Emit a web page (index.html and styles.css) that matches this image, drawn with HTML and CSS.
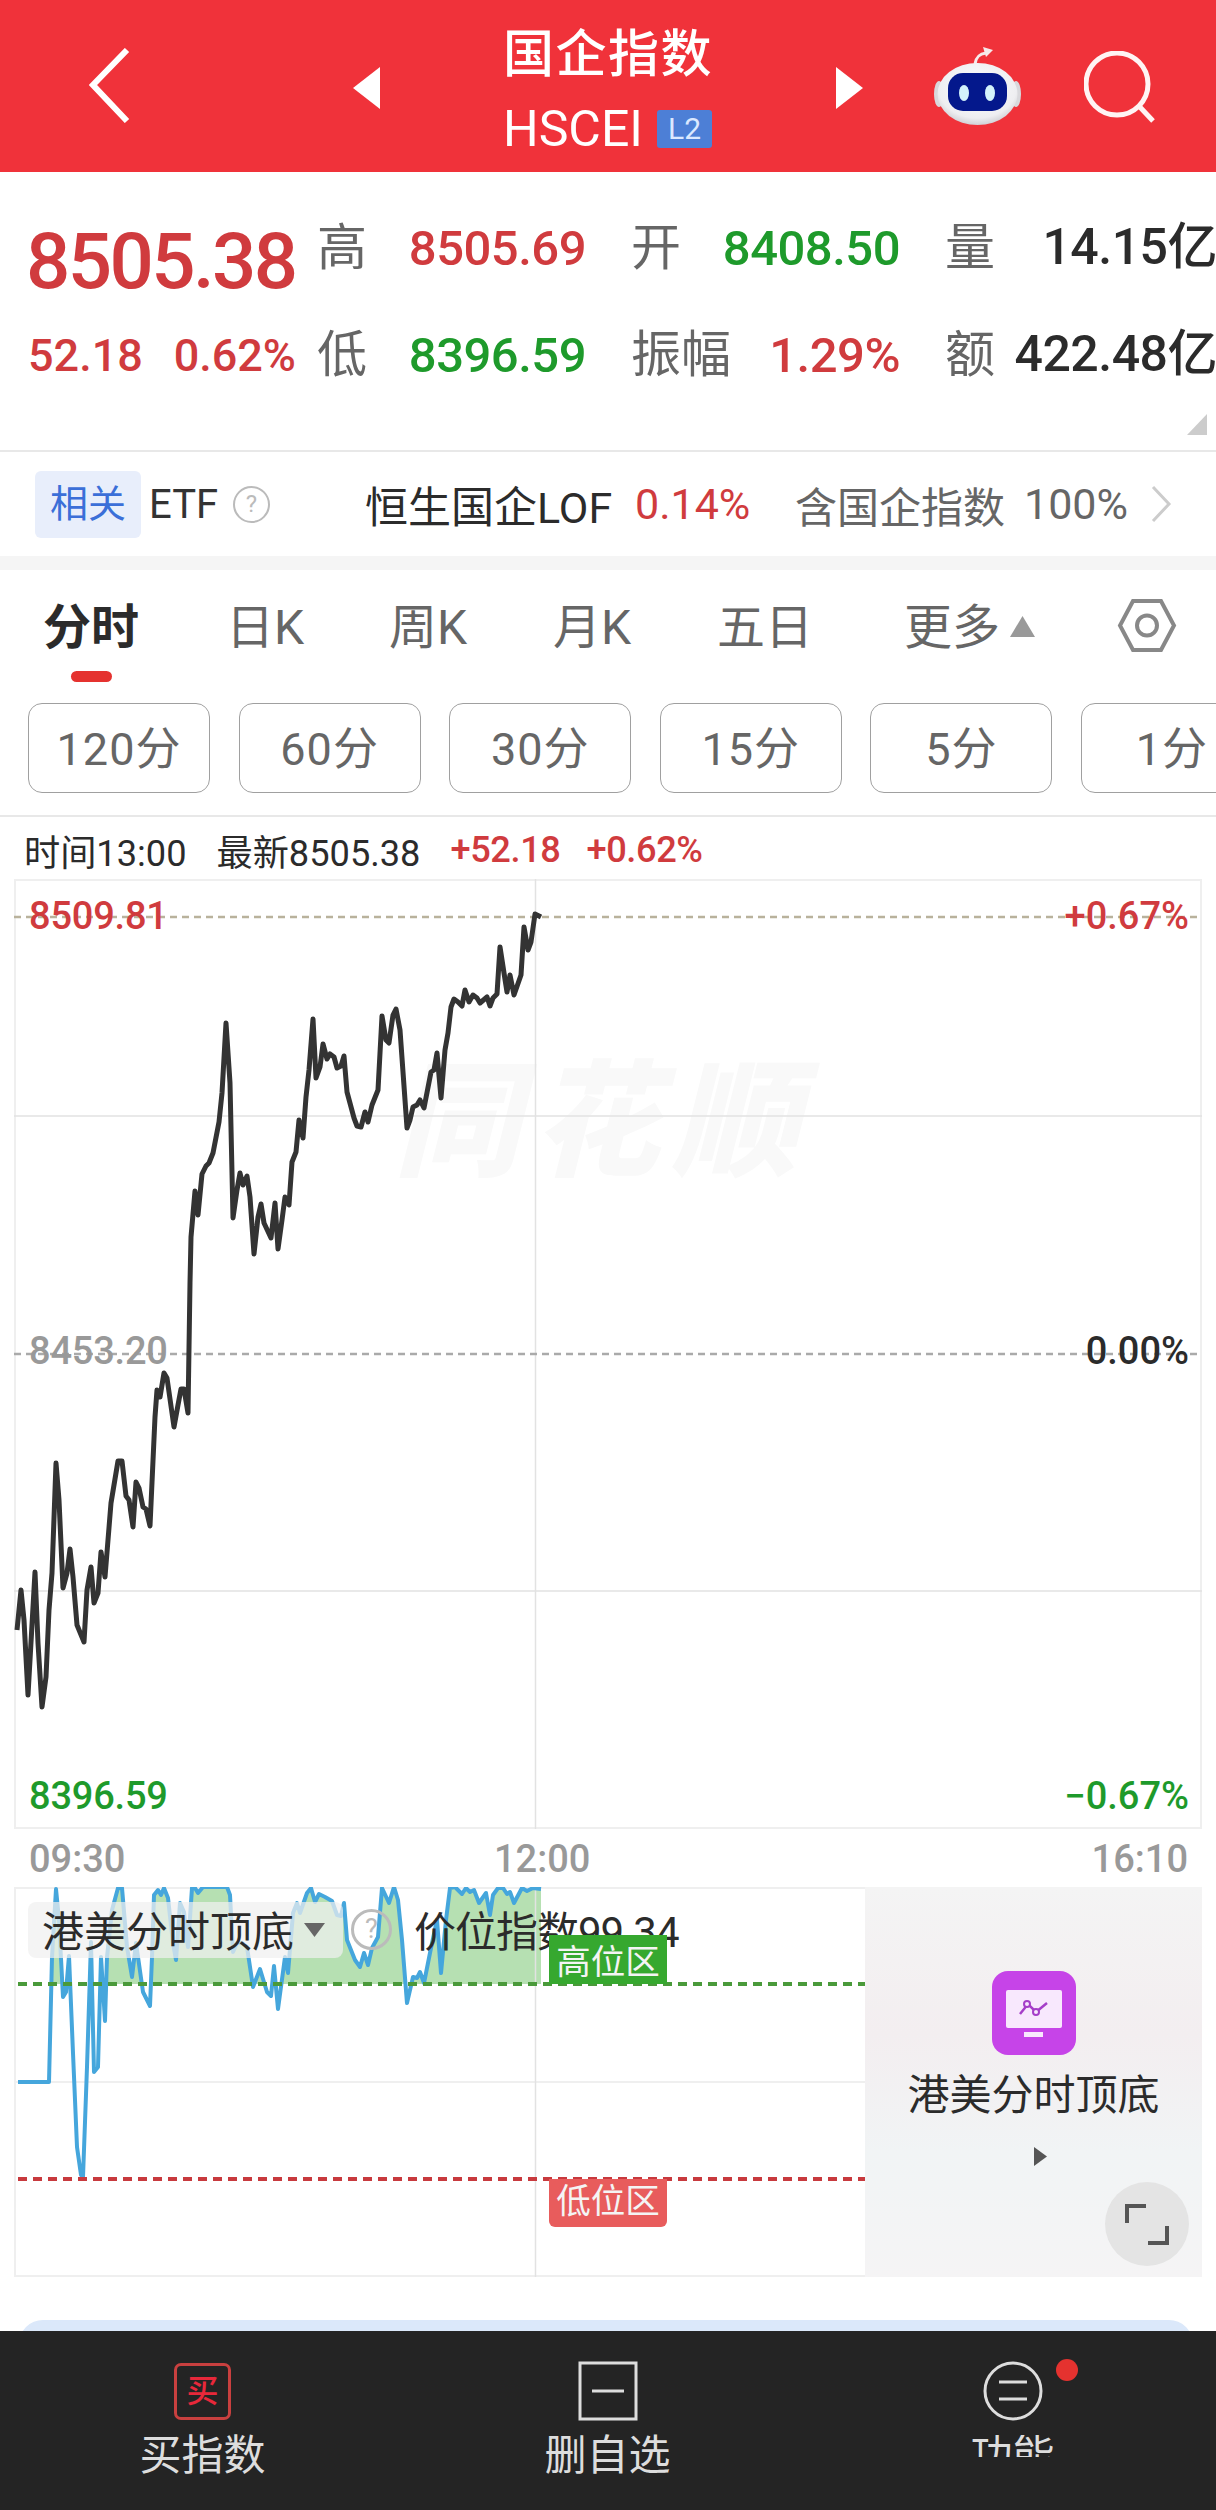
FILE: index.html
```html
<!DOCTYPE html>
<html lang="zh-CN">
<head>
    <meta charset="UTF-8">
    <meta name="viewport" content="width=device-width, initial-scale=1.0">
    <title>国企指数 HSCEI</title>
    <link rel="stylesheet" href="styles.css">
</head>
<body>
<div class="page">
    <header class="topbar">
        <svg class="back" viewBox="0 0 41 75"><polyline points="38,2 4,37 38,73"/></svg>
        <svg class="arrow-left" viewBox="0 0 27 42"><polygon points="27,0 27,42 0,21"/></svg>
        <div class="title">
            <div class="title-name">国企指数</div>
            <div class="title-code">HSCEI <span class="badge">L2</span></div>
        </div>
        <svg class="arrow-right" viewBox="0 0 27 42"><polygon points="0,0 0,42 27,21"/></svg>
        <svg class="robot" viewBox="0 0 87 80">
            <defs>
                <radialGradient id="head" cx="50%" cy="40%" r="65%">
                    <stop offset="0%" stop-color="#ffffff"/>
                    <stop offset="75%" stop-color="#eeeef1"/>
                    <stop offset="100%" stop-color="#c4c4ca"/>
                </radialGradient>
            </defs>
            <path class="antenna" d="M41 19 C42 12 45 9 52 8"/>
            <polygon class="antenna-tip" points="49,2 59,5 52,12"/>
            <ellipse class="ear" cx="5" cy="49" rx="5" ry="13"/>
            <ellipse class="ear" cx="82" cy="49" rx="5" ry="13"/>
            <ellipse cx="43.5" cy="49" rx="40" ry="31" fill="url(#head)"/>
            <rect class="visor" x="14" y="28" width="59" height="38" rx="15"/>
            <ellipse class="eye" cx="30" cy="48" rx="5" ry="8"/>
            <ellipse class="eye" cx="56" cy="48" rx="5" ry="8"/>
        </svg>
        <svg class="search" viewBox="0 0 72 72"><circle cx="33" cy="33" r="31"/><line x1="55" y1="55" x2="69" y2="70"/></svg>
    </header>

    <section class="quote">
        <div class="quote-left">
            <div class="price up">8505.38</div>
            <div class="change up"><span>52.18</span><span>0.62%</span></div>
        </div>
        <div class="stats">
            <div class="stat"><span class="stat-label">高</span><span class="stat-value up">8505.69</span></div>
            <div class="stat"><span class="stat-label">开</span><span class="stat-value down">8408.50</span></div>
            <div class="stat stat-last"><span class="stat-label">量</span><span class="stat-value">14.15亿</span></div>
            <div class="stat"><span class="stat-label">低</span><span class="stat-value down">8396.59</span></div>
            <div class="stat"><span class="stat-label">振幅</span><span class="stat-value up">1.29%</span></div>
            <div class="stat stat-last"><span class="stat-label">额</span><span class="stat-value">422.48亿</span></div>
        </div>
        <div class="corner"></div>
    </section>

    <section class="related">
        <span class="related-tag">相关</span>
        <span class="related-etf">ETF</span>
        <span class="help help-small">?</span>
        <span class="related-name">恒生国企LOF</span>
        <span class="related-pct">0.14%</span>
        <span class="related-hold">含国企指数</span>
        <span class="related-num">100%</span>
        <svg class="chevron" viewBox="0 0 22 38"><polyline points="3,2 19,19 3,36"/></svg>
    </section>

    <div class="band"></div>

    <nav class="tabs">
        <div class="tab tab-active">分时</div>
        <div class="tab">日K</div>
        <div class="tab">周K</div>
        <div class="tab">月K</div>
        <div class="tab">五日</div>
        <div class="tab tab-more">更多
            <svg class="more-arrow" viewBox="0 0 25 21"><polygon points="12.5,0 25,21 0,21"/></svg>
        </div>
        <svg class="hex" viewBox="0 0 60 55"><polygon points="16,3 44,3 57,27.5 44,52 16,52 3,27.5"/><circle cx="30" cy="27.5" r="10"/></svg>
    </nav>

    <div class="periods">
        <div class="period">120分</div>
        <div class="period">60分</div>
        <div class="period">30分</div>
        <div class="period">15分</div>
        <div class="period">5分</div>
        <div class="period">1分</div>
    </div>

    <div class="info">
        <span>时间13:00</span>
        <span>最新8505.38</span>
        <span class="up">+52.18</span>
        <span class="up">+0.62%</span>
    </div>

    <section class="chart-main">
        <svg class="chart-svg" viewBox="14 879 1188 950" width="1188" height="950">
            <text class="watermark" x="394" y="1166">同花顺</text>
            <line class="grid" x1="14" y1="880" x2="1202" y2="880"/>
            <line class="grid" x1="14" y1="1828" x2="1202" y2="1828"/>
            <line class="grid" x1="15" y1="879" x2="15" y2="1829"/>
            <line class="grid" x1="1201" y1="879" x2="1201" y2="1829"/>
            <line class="grid grid-mid" x1="14" y1="1116" x2="1202" y2="1116"/>
            <line class="grid grid-mid" x1="14" y1="1591" x2="1202" y2="1591"/>
            <line class="grid grid-mid" x1="535.5" y1="879" x2="535.5" y2="1829"/>
            <line class="dash-top" x1="14" y1="917" x2="1202" y2="917"/>
            <line class="dash-mid" x1="14" y1="1354" x2="1202" y2="1354"/>
            <polyline class="price-line" points="17,1630 21,1590 24,1620 28,1695 35,1572 38,1643 42,1707 46,1677 49,1610 52,1573 56,1463 59,1500 63,1588 67,1573 70,1549 73,1577 77,1625 84,1642 87,1590 91,1567 94,1603 98,1593 101,1552 105,1577 111,1503 118,1461 122,1461 126,1496 129,1500 133,1527 136,1482 139,1488 143,1507 146,1509 150,1526 155,1417 157,1390 160,1397 164,1373 167,1378 174,1427 178,1405 181,1389 184,1389 188,1413 190,1283 191,1237 195,1191 198,1215 202,1174 206,1166 209,1163 213,1153 219,1122 222,1093 226,1023 230,1083 233,1218 237,1190 240,1173 243,1185 247,1176 250,1197 254,1254 258,1217 261,1204 264,1223 271,1238 275,1203 278,1249 282,1220 285,1197 289,1205 292,1162 296,1152 299,1120 303,1138 306,1097 309,1070 313,1019 316,1078 320,1067 323,1044 327,1059 330,1054 334,1057 337,1068 341,1066 344,1056 347,1092 354,1118 357,1126 361,1127 365,1112 368,1122 372,1105 378,1090 382,1016 386,1040 389,1043 393,1015 396,1009 400,1030 407,1128 410,1120 413,1107 417,1105 420,1100 424,1108 431,1072 434,1070 437,1053 441,1098 445,1050 448,1033 451,1007 454,999 458,1002 462,1006 465,990 469,1002 473,995 477,998 480,1003 487,997 490,1006 493,998 497,994 500,947 504,973 507,992 510,975 514,995 521,975 524,927 528,950 531,942 535,914 541,917"/>
        </svg>
        <span class="axis-label label-left label-top up">8509.81</span>
        <span class="axis-label label-left label-mid muted">8453.20</span>
        <span class="axis-label label-left label-bottom down">8396.59</span>
        <span class="axis-label label-right label-top up">+0.67%</span>
        <span class="axis-label label-right label-mid">0.00%</span>
        <span class="axis-label label-right label-bottom down">−0.67%</span>
    </section>

    <div class="time-axis">
        <span>09:30</span>
        <span>12:00</span>
        <span>16:10</span>
    </div>

    <section class="sub-chart">
        <div class="sub-plot">
            <svg class="chart-svg" viewBox="14 1887 851 390" width="851" height="390">
                <defs>
                    <clipPath id="aboveHigh"><rect x="14" y="1887" width="851" height="97"/></clipPath>
                </defs>
                <line class="grid" x1="14" y1="1888" x2="865" y2="1888"/>
                <line class="grid" x1="14" y1="2276" x2="865" y2="2276"/>
                <line class="grid" x1="15" y1="1887" x2="15" y2="2277"/>
                <line class="grid" x1="14" y1="2082" x2="865" y2="2082"/>
                <polygon class="high-fill" clip-path="url(#aboveHigh)" points="49,2082 52,1957 56,1889 59,1920 63,1997 66,1992 69,1956 73,2053 77,2147 81,2175 83,2177 87,2067 91,1942 94,2072 98,2067 101,1957 105,2021 107,1957 112,1910 118,1888 122,1888 127,1947 132,1977 136,1943 143,1992 150,2006 152,1957 154,1895 158,1890 161,1895 164,1888 168,1898 173,1943 176,1960 180,1903 184,1912 188,1947 192,1888 195,1888 198,1893 203,1887 227,1887 230,1895 233,1952 237,1943 242,1943 247,1947 253,1987 260,1969 267,1992 271,1996 274,1966 278,2009 285,1957 288,1973 293,1913 297,1903 300,1913 307,1893 311,1888 315,1902 319,1894 325,1897 332,1901 337,1915 341,1916 344,1903 347,1940 355,1960 360,1967 364,1953 368,1965 372,1948 378,1937 382,1888 389,1903 394,1887 398,1900 402,1940 407,2003 413,1977 417,1978 420,1972 424,1983 431,1948 437,1920 441,1973 446,1920 450,1888 455,1887 462,1894 466,1888 470,1892 474,1890 479,1903 486,1893 490,1915 493,1895 498,1888 503,1888 507,1894 510,1892 514,1903 522,1888 527,1891 533,1888 541,1889 541,2100 49,2100"/>
                <line class="grid grid-mid" x1="535.5" y1="1887" x2="535.5" y2="2277"/>
                <polyline class="index-line" points="18,2082 49,2082 52,1957 56,1889 59,1920 63,1997 66,1992 69,1956 73,2053 77,2147 81,2175 83,2177 87,2067 91,1942 94,2072 98,2067 101,1957 105,2021 107,1957 112,1910 118,1888 122,1888 127,1947 132,1977 136,1943 143,1992 150,2006 152,1957 154,1895 158,1890 161,1895 164,1888 168,1898 173,1943 176,1960 180,1903 184,1912 188,1947 192,1888 195,1888 198,1893 203,1887 227,1887 230,1895 233,1952 237,1943 242,1943 247,1947 253,1987 260,1969 267,1992 271,1996 274,1966 278,2009 285,1957 288,1973 293,1913 297,1903 300,1913 307,1893 311,1888 315,1902 319,1894 325,1897 332,1901 337,1915 341,1916 344,1903 347,1940 355,1960 360,1967 364,1953 368,1965 372,1948 378,1937 382,1888 389,1903 394,1887 398,1900 402,1940 407,2003 413,1977 417,1978 420,1972 424,1983 431,1948 437,1920 441,1973 446,1920 450,1888 455,1887 462,1894 466,1888 470,1892 474,1890 479,1903 486,1893 490,1915 493,1895 498,1888 503,1888 507,1894 510,1892 514,1903 522,1888 527,1891 533,1888 541,1889"/>
                <line class="dash-high" x1="18" y1="1984" x2="865" y2="1984"/>
                <line class="dash-low" x1="18" y1="2179" x2="865" y2="2179"/>
            </svg>
            <div class="sub-head">
                <div class="sub-chip"><span class="chip-text">港美分时顶底</span>
                    <svg class="chip-arrow" viewBox="0 0 21 14"><polygon points="0,0 21,0 10.5,14"/></svg>
                </div>
                <span class="help help-large">?</span>
                <span class="sub-value">价位指数99.34</span>
            </div>
            <span class="zone zone-high">高位区</span>
            <span class="zone zone-low">低位区</span>
        </div>
        <div class="sub-side">
            <svg class="side-icon" viewBox="0 0 84 84">
                <rect class="side-icon-bg" width="84" height="84" rx="16"/>
                <rect class="side-icon-screen" x="14" y="19" width="56" height="38" rx="2"/>
                <rect class="side-icon-screen" x="32" y="61" width="19" height="5"/>
                <polyline class="side-icon-line" points="28,43 36,33 44,41 55,32"/>
                <circle class="side-icon-dot" cx="35" cy="33" r="3"/>
                <circle class="side-icon-dot" cx="44" cy="41" r="3"/>
            </svg>
            <div class="side-name">港美分时顶底</div>
            <svg class="side-play" viewBox="0 0 13 19"><polygon points="0,0 13,9.5 0,19"/></svg>
            <div class="expand">
                <svg viewBox="0 0 84 84"><polyline points="22,41 22,24 41,24"/><polyline points="43,61 62,61 62,44"/></svg>
            </div>
        </div>
    </section>

    <div class="next-card"></div>

    <footer class="footer">
        <div class="foot-item">
            <div class="buy-icon">买</div>
            <div class="foot-label">买指数</div>
        </div>
        <div class="foot-item">
            <svg class="foot-icon" viewBox="0 0 60 60"><rect x="2" y="2" width="56" height="56"/><line x1="14" y1="30" x2="46" y2="30"/></svg>
            <div class="foot-label">删自选</div>
        </div>
        <div class="foot-item foot-more">
            <svg class="foot-icon" viewBox="0 0 60 60"><circle cx="30" cy="30" r="28"/><line x1="16" y1="21" x2="44" y2="21"/><line x1="16" y1="38" x2="44" y2="38"/></svg>
            <span class="dot"></span>
            <div class="foot-label foot-label-cut">功能</div>
        </div>
    </footer>
</div>
</body>
</html>
```

FILE: styles.css
```css
* {
    box-sizing: border-box;
}
body {
    margin: 0;
    background: white;
    font-family: Roboto, "Noto Sans CJK SC", sans-serif;
    color: #2b2b2b;
}
.page {
    width: 1216px;
    height: 2510px;
    overflow: hidden;
    display: flex;
    flex-direction: column;
}
.up { color: #d03b3e; }
.down { color: #1e9a2b; }
.muted { color: #999; }

/* top bar */
.topbar {
    height: 172px;
    flex: none;
    background: #f0323a;
    display: flex;
    align-items: center;
    padding-left: 89px;
    color: white;
}
.back {
    width: 41px;
    height: 75px;
    margin-right: 223px;
    margin-top: -1px;
}
.back polyline {
    fill: none;
    stroke: white;
    stroke-width: 6;
}
.arrow-left, .arrow-right {
    width: 27px;
    height: 42px;
    fill: white;
    margin-top: 4px;
}
.title {
    width: 208px;
    margin: 0 124px;
    padding-top: 6px;
}
.title-name {
    font-size: 51px;
    line-height: 50px;
    font-weight: 500;
    letter-spacing: 1.5px;
    white-space: nowrap;
    margin-left: -1px;
}
.title-code {
    display: flex;
    align-items: center;
    justify-content: space-between;
    margin-top: 30px;
    height: 38px;
    font-size: 50px;
    white-space: nowrap;
    margin-left: -1px;
}
.badge {
    width: 55px;
    height: 38px;
    line-height: 38px;
    background: #4d7fd6;
    border-radius: 3px;
    text-align: center;
    font-size: 30px;
    color: #dbe8ff;
}
.robot {
    width: 87px;
    height: 80px;
    margin-left: 71px;
    margin-top: -2px;
}
.antenna {
    fill: none;
    stroke: #f6eaea;
    stroke-width: 3;
}
.antenna-tip { fill: #f6eaea; }
.ear { fill: #d8d8dc; }
.visor { fill: #04188c; }
.eye { fill: #d4f3fb; }
.search {
    width: 72px;
    height: 72px;
    margin-left: 63px;
    margin-top: 2px;
}
.search circle, .search line {
    fill: none;
    stroke: #fff4f4;
    stroke-width: 5;
}

/* quote block */
.quote {
    height: 280px;
    flex: none;
    display: flex;
    border-bottom: 2px solid #e8e8e8;
    padding-left: 29px;
    position: relative;
}
.quote-left {
    width: 288px;
    padding-top: 61px;
}
.price {
    font-size: 78px;
    line-height: 58px;
    font-weight: 500;
    letter-spacing: -2.6px;
    margin-left: -3px;
}
.change {
    display: flex;
    justify-content: space-between;
    width: 268px;
    margin: 43px 0 0 -1px;
    font-size: 45px;
    line-height: 44px;
    font-weight: 500;
}
.stats {
    display: grid;
    grid-template-columns: repeat(3, 269px);
    grid-auto-rows: 54px;
    column-gap: 45px;
    row-gap: 53px;
    padding-top: 50px;
}
.stat {
    display: flex;
    align-items: center;
    justify-content: space-between;
    white-space: nowrap;
}
.stat-last {
    margin-right: -3px;
}
.stat-label {
    font-size: 50px;
    line-height: 54px;
    margin-top: -3px;
    color: #666;
}
.stat-value {
    font-size: 49px;
    line-height: 54px;
    font-weight: 500;
    letter-spacing: -0.5px;
}
.stat-last .stat-value {
    font-size: 50px;
    margin-top: -5px;
}
.corner {
    position: absolute;
    left: 1187px;
    top: 242px;
    width: 20px;
    height: 21px;
    background: #ccc;
    clip-path: polygon(100% 0, 100% 100%, 0 100%);
}

/* related row */
.related {
    height: 104px;
    flex: none;
    display: flex;
    align-items: center;
    padding-left: 35px;
    font-size: 42px;
    white-space: nowrap;
}
.related-tag {
    width: 106px;
    height: 67px;
    line-height: 67px;
    text-align: center;
    background: #e8eefb;
    border-radius: 6px;
    color: #3b6fd8;
    font-size: 38px;
    margin-right: 8px;
}
.related-etf {
    font-size: 40px;
    width: 84px;
    color: #333;
}
.help {
    border-radius: 50%;
    text-align: center;
    color: #bbb;
    border: 2px solid #bbb;
}
.help-small {
    width: 37px;
    height: 37px;
    line-height: 33px;
    font-size: 24px;
}
.related-name {
    margin-left: 95px;
    width: 270px;
    font-size: 43px;
    color: #2b2b2b;
}
.related-pct {
    width: 160px;
    color: #d03b3e;
    font-size: 43px;
}
.related-hold {
    width: 229px;
    color: #666;
}
.related-num {
    width: 126px;
    font-size: 43px;
    color: #666;
}
.chevron {
    width: 22px;
    height: 38px;
}
.chevron polyline {
    fill: none;
    stroke: #ccc;
    stroke-width: 3;
}
.band {
    height: 14px;
    flex: none;
    background: #f5f5f5;
}

/* tabs */
.tabs {
    height: 133px;
    flex: none;
    display: grid;
    grid-template-columns: 183px 163px 164px 164px 187px 213px 60px;
    padding: 34px 0 0 43px;
    font-size: 48px;
    color: #666;
}
.tab {
    line-height: 48px;
    white-space: nowrap;
}
.tab-active {
    font-weight: 700;
    color: #2b2b2b;
}
.tab-active::after {
    content: "";
    display: block;
    width: 41px;
    height: 11px;
    margin: 19px 0 0 28px;
    background: #e5322f;
    border-radius: 6px;
}
.tab-more {
    display: flex;
}
.more-arrow {
    width: 25px;
    height: 21px;
    fill: #999;
    margin: 12px 0 0 10px;
}
.hex {
    width: 60px;
    height: 55px;
    margin-top: -6px;
}
.hex polygon, .hex circle {
    fill: none;
    stroke: #888;
    stroke-width: 4;
}

/* period buttons */
.periods {
    height: 114px;
    flex: none;
    display: flex;
    gap: 28.6px;
    padding-left: 28px;
    border-bottom: 2px solid #e8e8e8;
    white-space: nowrap;
}
.period {
    width: 182px;
    height: 90px;
    flex: none;
    line-height: 91px;
    text-align: center;
    border: 1.5px solid #a0a0a0;
    border-radius: 14px;
    font-size: 45px;
    letter-spacing: 1px;
    color: #666;
}

/* info row */
.info {
    height: 62px;
    flex: none;
    display: flex;
    align-items: center;
    gap: 30px;
    padding: 3px 0 0 24px;
    font-size: 36.2px;
    white-space: nowrap;
}
.info .up {
    font-weight: 500;
    letter-spacing: -0.4px;
}
.info .up + .up {
    margin-left: -4px;
}

/* charts */
.chart-main {
    width: 1188px;
    height: 950px;
    flex: none;
    margin-left: 14px;
    position: relative;
}
.chart-svg {
    display: block;
    overflow: hidden;
}
.watermark {
    font-size: 126px;
    font-weight: 900;
    font-style: italic;
    letter-spacing: 13px;
    fill: #f9f9f9;
}
.grid {
    stroke: #efefef;
    stroke-width: 2;
}
.grid-mid {
    stroke: #e2e2e2;
    stroke-width: 1.5;
}
.dash-top {
    stroke: #b9b29c;
    stroke-width: 2.5;
    stroke-dasharray: 7 5;
}
.dash-mid {
    stroke: #aaa;
    stroke-width: 2.5;
    stroke-dasharray: 7 5;
}
.price-line {
    fill: none;
    stroke: #333;
    stroke-width: 5;
    stroke-linejoin: round;
}
.axis-label {
    position: absolute;
    font-size: 38px;
    line-height: 40px;
    font-weight: 500;
    white-space: nowrap;
}
.label-left { left: 15px; letter-spacing: -0.2px; }
.label-right { right: 13px; }
.label-top { top: 17px; }
.label-mid { top: 452px; }
.label-bottom { top: 897px; }
.time-axis {
    height: 58px;
    flex: none;
    display: grid;
    grid-template-columns: 465px 1fr auto;
    align-items: center;
    padding: 2px 28px 0 29px;
    font-size: 38px;
    font-weight: 500;
    color: #999;
}
.sub-chart {
    height: 390px;
    flex: none;
    margin-left: 14px;
    display: flex;
}
.sub-plot {
    width: 851px;
    height: 390px;
    position: relative;
}
.high-fill { fill: #b6e0b2; }
.index-line {
    fill: none;
    stroke: #45a6dc;
    stroke-width: 4;
    stroke-linejoin: round;
}
.dash-high {
    stroke: #4a9a3a;
    stroke-width: 4;
    stroke-dasharray: 9 6;
}
.dash-low {
    stroke: #c83a3e;
    stroke-width: 4;
    stroke-dasharray: 9 6;
}
.sub-head {
    position: absolute;
    left: 14px;
    top: 13px;
    display: flex;
    align-items: center;
    white-space: nowrap;
    font-size: 42px;
}
.sub-chip {
    width: 315px;
    height: 56px;
    display: flex;
    align-items: center;
    padding-left: 14px;
    background: rgba(240, 240, 240, 0.72);
    border-radius: 8px;
}
.chip-text {
    margin-top: -3px;
}
.chip-arrow {
    width: 21px;
    height: 14px;
    fill: #666;
    margin-left: 10px;
}
.help-large {
    width: 41px;
    height: 41px;
    line-height: 35px;
    font-size: 27px;
    border-width: 3px;
    margin-left: 8px;
}
.sub-value {
    margin: -2px 0 0 22px;
    letter-spacing: -1px;
}
.zone {
    position: absolute;
    left: 535px;
    width: 118px;
    text-align: center;
    color: #f4f4f4;
    font-size: 34.5px;
}
.zone-high {
    top: 48px;
    height: 49px;
    line-height: 54px;
    background: #36a82f;
}
.zone-low {
    top: 292px;
    height: 48px;
    line-height: 44px;
    background: #e85c5c;
    border-radius: 0 0 6px 6px;
}
.sub-side {
    width: 337px;
    height: 390px;
    position: relative;
    display: flex;
    flex-direction: column;
    align-items: center;
    padding-top: 84px;
    background: linear-gradient(180deg, #f4f4f4 0%, #f3eef0 38%, #f1f4f5 68%, #f5f4f5 100%);
}
.side-icon {
    width: 84px;
    height: 84px;
    flex: none;
}
.side-icon-bg { fill: #c644e8; }
.side-icon-screen { fill: #f8e8fd; }
.side-icon-line {
    fill: none;
    stroke: #a53ec8;
    stroke-width: 2.5;
}
.side-icon-dot {
    fill: #f8e8fd;
    stroke: #a53ec8;
    stroke-width: 2;
}
.side-name {
    margin-top: 20px;
    font-size: 42px;
    line-height: 42px;
    white-space: nowrap;
}
.side-play {
    width: 13px;
    height: 19px;
    fill: #555;
    margin: 30px 0 0 14px;
}
.expand {
    position: absolute;
    left: 240px;
    top: 295px;
    width: 84px;
    height: 84px;
    border-radius: 50%;
    background: #e4e4e4;
}
.expand polyline {
    fill: none;
    stroke: #555;
    stroke-width: 4;
}
.next-card {
    height: 60px;
    flex: none;
    margin: 43px 23px 0 19px;
    background: #dbe8fa;
    border-radius: 24px 24px 0 0;
}

/* bottom bar */
.footer {
    height: 179px;
    flex: none;
    margin-top: -49px;
    position: relative;
    background: #242424;
    display: grid;
    grid-template-columns: repeat(3, 405px);
    color: #ddd;
}
.foot-item {
    display: flex;
    flex-direction: column;
    align-items: center;
    padding-top: 30px;
    position: relative;
}
.foot-icon {
    width: 60px;
    height: 60px;
    fill: none;
    stroke: #ddd;
    stroke-width: 3;
}
.buy-icon {
    width: 57px;
    height: 57px;
    margin: 2px 0 1px;
    border: 3px solid #c9403f;
    border-radius: 7px;
    text-align: center;
    line-height: 50px;
    font-size: 32px;
    font-weight: 500;
    color: #e8283a;
}
.foot-label {
    margin-top: 14px;
    line-height: 42px;
    font-size: 42px;
    white-space: nowrap;
}
.foot-label-cut {
    height: 22px;
    overflow: hidden;
}
.dot {
    position: absolute;
    left: 246px;
    top: 28px;
    width: 22px;
    height: 22px;
    border-radius: 50%;
    background: #e5322f;
}
```
